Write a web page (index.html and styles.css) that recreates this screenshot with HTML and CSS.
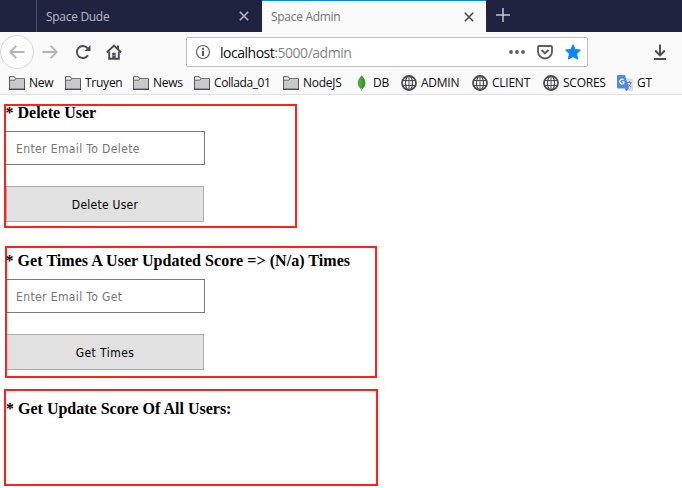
FILE: index.html
```html
<!DOCTYPE html>
<html lang="en">
<head>
<meta charset="utf-8">
<title>Space Admin</title>
<link rel="stylesheet" href="styles.css">
</head>
<body>
<svg class="defs" width="0" height="0" aria-hidden="true">
  <symbol id="folder" viewBox="0 0 16 14"><path d="M.5 13.300V.7h4.800l1.500 2h8.700v10.600z" fill="#ededee" stroke="#58585a"/><path d="M1 4.500h5l1-1h8v9.300H1z" fill="#c8c8ca"/><path d="M1 4.200h4.800l1.200-1.500" fill="none" stroke="#58585a" stroke-width=".9"/><path d="M0 13.300h16" stroke="#4a4a4f" stroke-width="1.400"/></symbol>
  <symbol id="globe" viewBox="0 0 16 16"><g fill="none" stroke="#4a4a4f"><circle cx="8" cy="8" r="7" stroke-width="1.800"/><ellipse cx="8" cy="8" rx="3.500" ry="7" stroke-width="1.200"/><path d="M8 1v14M1.500 5.500h13M1.500 10.500h13" stroke-width="1"/></g></symbol>
  <symbol id="close" viewBox="0 0 10 10"><path d="M.8.8l8.400 8.400M9.200.8L.8 9.200" fill="none" stroke="currentColor" stroke-width="1.600"/></symbol>
</svg>
<header>
  <div class="tabs">
    <div class="tab"><span class="tab-title">Space Dude</span><svg class="close"><use href="#close"/></svg></div>
    <div class="tab active"><span class="tab-title">Space Admin</span><svg class="close"><use href="#close"/></svg></div>
    <svg class="plus" viewBox="0 0 14 14"><path d="M7 0v14M0 7h14" stroke="#c2c3ce" stroke-width="1.500"/></svg>
  </div>
  <nav class="toolbar">
    <span class="back"><svg width="16" height="16" viewBox="0 0 16 16"><path d="M15.500 8H1.500M7.300 1.800L1.300 8l6 6.200" fill="none" stroke="#b4b4b6" stroke-width="1.900"/></svg></span>
    <svg class="forward" viewBox="0 0 16 16"><path d="M.5 8h14M8.700 1.800l6 6.200-6 6.200" fill="none" stroke="#b4b4b6" stroke-width="1.900"/></svg>
    <svg class="reload" viewBox="0 0 16 16"><path d="M12.500 4.200A6 6 0 1 0 13 11.200" fill="none" stroke="#4a4a4f" stroke-width="1.900"/><path d="M15.500 1v6H9.500z" fill="#4a4a4f"/></svg>
    <svg class="home" viewBox="0 0 16 16"><path d="M.8 8.500L8 1.500l7.200 7" fill="none" stroke="#4a4a4f" stroke-width="1.900"/><path d="M3.200 7.500v7.300h9.600V7.500" fill="none" stroke="#4a4a4f" stroke-width="1.900"/><path d="M11 1.500h2v4h-2zM6.300 8.800h3.400v6H6.300z" fill="#4a4a4f"/><path d="M7.600 11h.9v1h-.9z" fill="#fff"/></svg>
    <div class="address">
      <svg class="info" viewBox="0 0 16 16"><circle cx="8" cy="8" r="6.500" fill="none" stroke="#5d5d61" stroke-width="1.200"/><path d="M7 3.800h2v2H7zM7 7h2v5H7z" fill="#5d5d61"/></svg>
      <span class="url">localhost<span>:5000/admin</span></span>
      <svg class="dots" viewBox="0 0 16 4"><g fill="#5d5d61"><circle cx="2" cy="2" r="1.900"/><circle cx="8" cy="2" r="1.900"/><circle cx="14" cy="2" r="1.900"/></g></svg>
      <svg class="pocket" viewBox="0 0 16 16"><path d="M2 2h12q1 0 1 1v4.500a7 7 0 0 1-14 0V3q0-1 1-1z" fill="none" stroke="#5d5d61" stroke-width="1.800"/><path d="M4.500 6L8 9.300 11.500 6" fill="none" stroke="#5d5d61" stroke-width="2"/></svg>
      <svg class="star" viewBox="0 0 16 16"><path d="M8 .8l2.200 4.700 5.200.6-3.800 3.600 1 5.500L8 12.600l-4.600 2.600 1-5.500L.6 6.100l5.200-.6z" fill="#0a84ff" stroke="#0a84ff" stroke-linejoin="round"/></svg>
    </div>
    <svg class="download" viewBox="0 0 14 16"><path d="M7 .5v11M2.200 6.500L7 11.300l4.800-4.800M1 15h12" fill="none" stroke="#4a4a4f" stroke-width="1.900"/></svg>
  </nav>
  <div class="bookmarks">
    <div class="bm b-new"><svg><use href="#folder"/></svg><span>New</span></div>
    <div class="bm b-truyen"><svg><use href="#folder"/></svg><span>Truyen</span></div>
    <div class="bm b-news"><svg><use href="#folder"/></svg><span>News</span></div>
    <div class="bm b-collada"><svg><use href="#folder"/></svg><span>Collada_01</span></div>
    <div class="bm b-node"><svg><use href="#folder"/></svg><span>NodeJS</span></div>
    <div class="bm b-db"><svg class="globe" viewBox="0 0 16 16"><path d="M8.500.5C3 6 4 11.500 8.500 14.500c4.500-3 5.500-8.500 0-14z" fill="#4caa3c"/><path d="M8.500.5c5.500 5.500 4.500 11 0 14z" fill="#3f9635"/><path d="M8.500 13v2.800" stroke="#a6b5a1"/></svg><span>DB</span></div>
    <div class="bm b-admin"><svg class="globe"><use href="#globe"/></svg><span>ADMIN</span></div>
    <div class="bm b-client"><svg class="globe"><use href="#globe"/></svg><span>CLIENT</span></div>
    <div class="bm b-scores"><svg class="globe"><use href="#globe"/></svg><span>SCORES</span></div>
    <div class="bm b-gt"><svg class="globe" viewBox="0 0 16 16"><path d="M6 3.500h9q1 0 1 1V15q0 1-1 1H9z" fill="#dcdcdc"/><path d="M1 0h7l4 13.500H1q-1 0-1-1V1q0-1 1-1z" fill="#4d8bea"/><path d="M8 13.500h4L9 16z" fill="#3367c5"/><path d="M6.600 4.800a2.300 2.300 0 1 0 .2 3.300V6.800H4.700" fill="none" stroke="#fff" stroke-width="1.100"/><path d="M9.800 7.500h5M12.300 6v1.500M14 7.500q-.8 3-3.200 4.500M10.500 8.500q1.200 2.500 3.800 3.500" fill="none" stroke="#718185" stroke-width=".9"/></svg><span>GT</span></div>
  </div>
</header>
<main>
  <section class="delete">
    <h4>* Delete User</h4>
    <input type="text" placeholder="Enter Email To Delete">
    <button>Delete User</button>
  </section>
  <section class="times">
    <h4>* Get Times A User Updated Score =&gt; (N/a) Times</h4>
    <input type="text" placeholder="Enter Email To Get">
    <button>Get Times</button>
  </section>
  <section class="scores">
    <h4>* Get Update Score Of All Users:</h4>
  </section>
</main>
</body>
</html>
```
FILE: styles.css
```css
* { box-sizing: border-box; }
body { margin: 0; background: #fff; overflow: hidden; font-family: "Open Sans", sans-serif; }
svg { display: block; flex: none; }
.defs { position: absolute; }
header { height: 95px; background: #f9f9fa; border-bottom: 1px solid #e0e0e1; }
.tabs { display: flex; height: 32px; padding-left: 36px; background: #202340; }
.tab { display: flex; align-items: center; justify-content: space-between; width: 226px; padding: 0 13px 0 9px; border-left: 1px solid #4d4f66; color: #b9bac5; font-size: 12px; letter-spacing: -.3px; }
.tab.active { width: 224px; padding: 0 12px 0 9px; border-left: 0; border-top: 1px solid #0a84ff; background: #f9f9fa; color: #737378; }
.tab-title { white-space: nowrap; line-height: 32px; padding-top: 1px; }
.active .tab-title { padding-top: 0; }
.close { width: 10px; height: 10px; }
.active .close { color: #4a4a4f; }
.plus { width: 14px; height: 14px; margin: 8px 0 0 10px; }
.toolbar { display: flex; align-items: center; height: 40px; }
.back { display: flex; align-items: center; justify-content: center; width: 34px; height: 34px; border: 1px solid #d8d8da; border-radius: 50%; background: #fcfcfc; }
.forward { width: 16px; height: 16px; margin-left: 8px; }
.reload { width: 16px; height: 16px; margin-left: 17px; }
.home { width: 16px; height: 16px; margin-left: 15px; }
.address { display: flex; align-items: center; width: 402px; height: 30px; margin-left: 64px; padding-left: 8px; border: 1px solid #bebebf; border-radius: 2px; background: #fff; }
.info { width: 16px; height: 16px; }
.url { width: 298px; padding: 2px 0 0 9px; font-size: 14px; letter-spacing: -.48px; color: #0c0c0d; line-height: 26px; }
.url span { color: #858588; }
.dots { width: 16px; height: 4px; }
.pocket { width: 16px; height: 16px; margin-left: 12px; }
.star { width: 16px; height: 16px; margin-left: 12px; }
.download { width: 14px; height: 16px; margin-left: 65px; }
.bookmarks { display: flex; height: 21px; padding-left: 9px; font-size: 12px; letter-spacing: -.25px; color: #0c0c0d; }
.bm { display: flex; align-items: center; gap: 4px; flex: none; white-space: nowrap; }
.bm svg { width: 16px; height: 14px; }
.bm svg.globe { height: 16px; }
.b-new { width: 56px; } .b-truyen { width: 68px; } .b-news { width: 61px; }
.b-collada { width: 89px; } .b-node { width: 70px; } .b-db { width: 48px; }
.b-collada { letter-spacing: -.4px; }
.b-admin, .b-client { width: 71px; } .b-scores { width: 74px; }
main { display: flex; flex-direction: column; padding-top: 9px; }
section { border: 2px solid #ff221c; }
h4 { margin: 0; font: bold 16px/18px "Liberation Serif", serif; color: #000; white-space: nowrap; }
input, button { display: block; margin: 0; border-radius: 0; font: 12px "DejaVu Sans Condensed", "DejaVu Sans", sans-serif; }
input { width: 199px; height: 34px; padding: 2px 9px 0 10px; border: 1px solid #7a7a7a; border-left: 0; background: #fff; letter-spacing: .38px; }
input::placeholder { color: #757575; opacity: 1; }
button { width: 198px; height: 36px; margin-top: 21px; padding: 2px 0 0; border: 1px solid #adadad; background: #e1e1e1; color: #000; letter-spacing: .25px; }
.delete { width: 293px; height: 124px; margin-left: 4px; }
.delete h4 { margin: -2px 0 9px -.5px; }
.times { width: 372px; height: 132px; margin: 18px 0 0 5px; }
.times h4 { margin: 4px 0 9px -1.5px; letter-spacing: .05px; }
.times input { width: 198px; padding-left: 9px; }
.times button { width: 197px; border-left: 0; letter-spacing: .45px; }
.scores { width: 374px; height: 97px; margin: 11px 0 0 4px; }
.scores h4 { margin-top: 9px; }
```
